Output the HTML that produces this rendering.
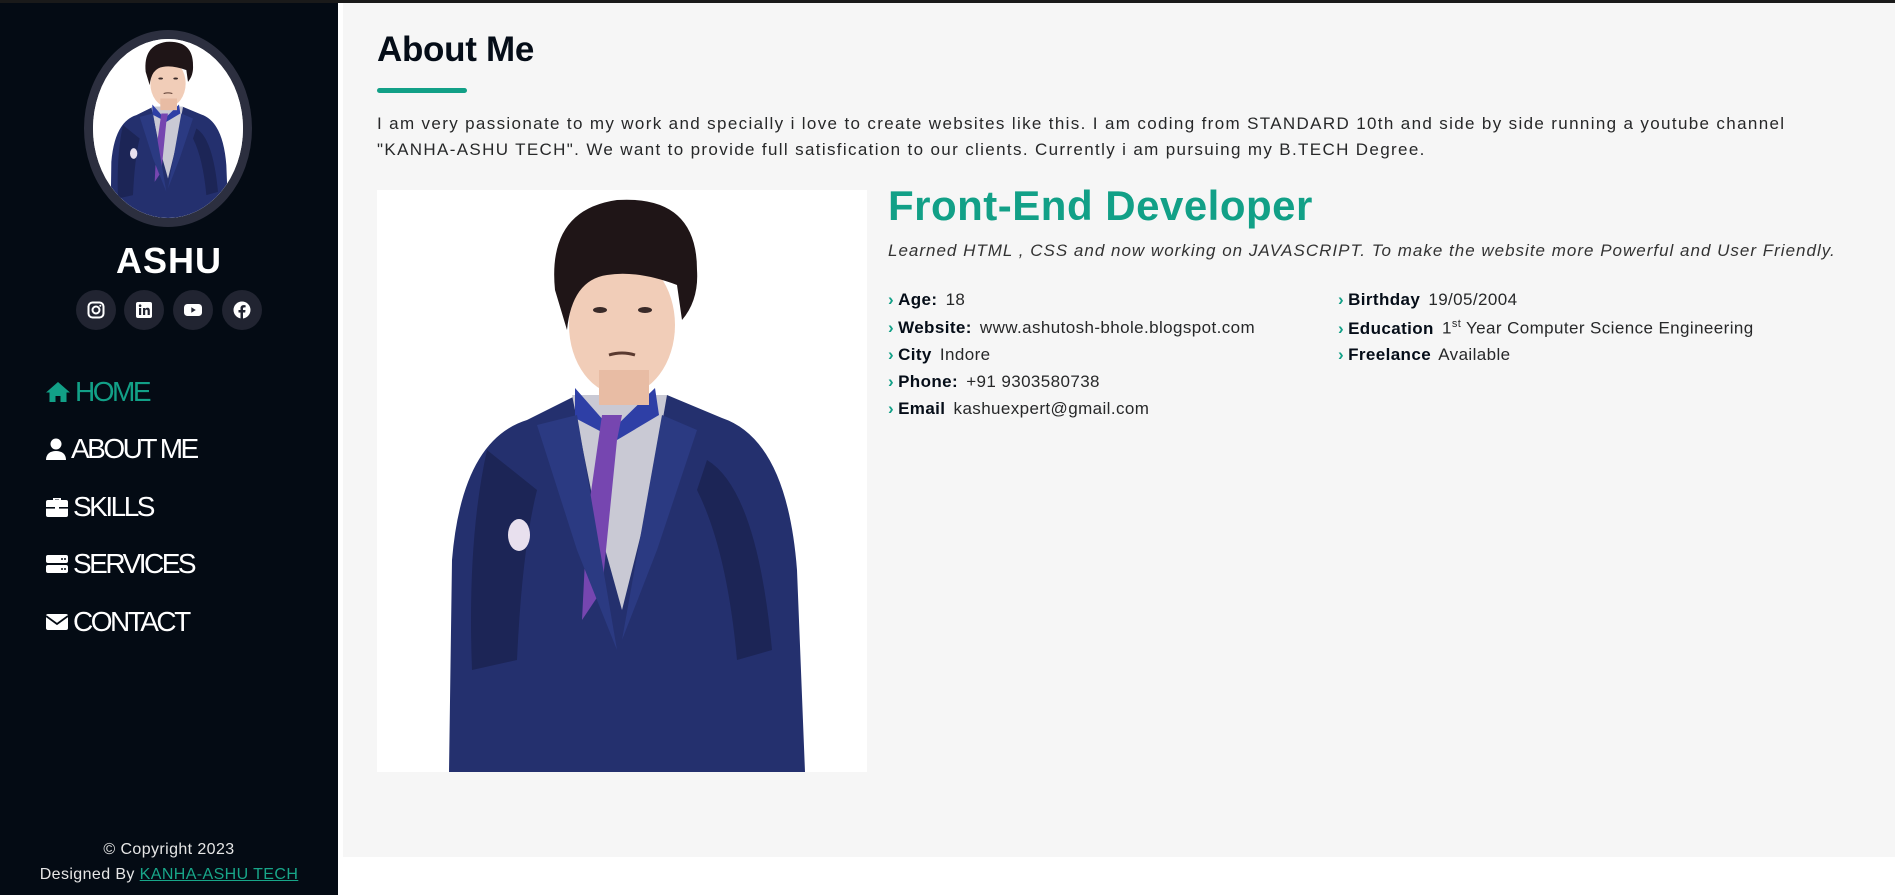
<!DOCTYPE html>
<html><head><meta charset="utf-8">
<style>
*{margin:0;padding:0;box-sizing:border-box}
body{width:1895px;height:895px;overflow:hidden;background:#fff;font-family:"Liberation Sans",sans-serif;position:relative}
.topbar{position:absolute;left:0;top:0;width:1895px;height:3px;background:#1a1a1a;z-index:5}
.side{position:absolute;left:0;top:0;width:338px;height:895px;background:#040b14}
.main{position:absolute;left:343px;top:3px;width:1552px;height:854px;background:#f6f6f6}
.avatar{position:absolute;left:84px;top:30px;width:168px;height:197px;border-radius:50%;border:9px solid #2c2f3f;background:#fff;overflow:hidden}
.name{position:absolute;left:0;width:338px;top:240px;text-align:center;color:#fff;font-weight:bold;font-size:36px;letter-spacing:1px}
.soc{position:absolute;width:40px;height:40px;border-radius:50%;background:#212431;top:290px}
.soc svg{position:absolute;left:11px;top:11px}
.nav{position:absolute;left:45px;color:#fff;font-size:28px;letter-spacing:-2.5px;display:flex;align-items:center;height:34px}
.nav svg{margin-right:4px}
.foot{position:absolute;left:0;width:338px;text-align:center;color:#e6e6e6;font-size:16px;letter-spacing:0.4px}
.foot a{color:#18a689;text-decoration:underline}
h1{position:absolute;left:377px;top:30px;font-size:35px;font-weight:bold;color:#050d18;letter-spacing:-0.3px}
.bar{position:absolute;left:377px;top:88px;width:90px;height:5px;border-radius:3px;background:#12a087}
.para{position:absolute;left:377px;top:111px;width:1500px;font-size:17px;line-height:26px;color:#272829;letter-spacing:1.35px;white-space:nowrap}
.photo{position:absolute;left:377px;top:190px;width:490px;height:582px;background:#fff}
h2{position:absolute;left:888px;top:182px;font-size:42px;font-weight:bold;color:#12a087;letter-spacing:0.5px}
.it{position:absolute;left:888px;top:241px;font-size:17px;font-style:italic;color:#333;letter-spacing:1px}
.li{position:absolute;font-size:17px;color:#272829;white-space:nowrap;letter-spacing:0.4px}
.li b{color:#050d18;margin-right:3px}
.li i{display:inline-block;color:#12a087;font-style:normal;font-weight:bold;margin-right:4px}
</style></head><body>
<div class="topbar"></div>
<div class="side">
  <div class="avatar">
    <svg width="150" height="179" viewBox="20 0 450 540" preserveAspectRatio="xMidYMid slice"><use href="#man"/></svg>
  </div>
  <div class="name">ASHU</div>
  <div class="soc" style="left:76px"><svg width="18" height="18" viewBox="0 0 18 18"><rect x="1.5" y="1.5" width="15" height="15" rx="4" fill="none" stroke="#fff" stroke-width="2"/><circle cx="9" cy="9" r="3.5" fill="none" stroke="#fff" stroke-width="2"/><circle cx="13.3" cy="4.7" r="1" fill="#fff"/></svg></div>
  <div class="soc" style="left:124px"><svg width="18" height="18" viewBox="0 0 18 18"><rect x="1" y="1" width="16" height="16" rx="2" fill="#fff"/><rect x="4" y="7" width="2.2" height="7" fill="#212431"/><circle cx="5.1" cy="4.7" r="1.3" fill="#212431"/><path d="M8 7h2.1v1c.5-.8 1.3-1.2 2.3-1.2 1.7 0 2.4 1 2.4 2.9V14h-2.2v-3.8c0-1-.3-1.6-1.1-1.6-.9 0-1.3.6-1.3 1.6V14H8z" fill="#212431"/></svg></div>
  <div class="soc" style="left:173px"><svg width="18" height="18" viewBox="0 0 18 18"><rect x="0" y="3" width="18" height="12" rx="3.5" fill="#fff"/><path d="M7.3 6.3v5.4L11.8 9z" fill="#212431"/></svg></div>
  <div class="soc" style="left:222px"><svg width="18" height="18" viewBox="0 0 18 18"><circle cx="9" cy="9" r="8.5" fill="#fff"/><path d="M10 18v-6.5h2.2l.3-2.5H10V7.6c0-.7.3-1.2 1.2-1.2h1.4V4.2c-.4 0-1.1-.1-2-.1-2 0-3.1 1.2-3.1 3.3V9H5.5v2.5h2V18z" fill="#212431"/></svg></div>

  <div class="nav" style="top:375px;color:#12a087"><svg width="26" height="22" viewBox="0 0 26 22"><path d="M13 1L1 11.5h3.5V21h6v-6h5v6h6v-9.5H25z" fill="#12a087"/></svg>HOME</div>
  <div class="nav" style="top:432px"><svg width="22" height="22" viewBox="0 0 22 22"><circle cx="11" cy="6" r="5.5" fill="#fff"/><path d="M1 22c0-6 4-9 10-9s10 3 10 9z" fill="#fff"/></svg>ABOUT ME</div>
  <div class="nav" style="top:490px"><svg width="24" height="22" viewBox="0 0 24 22"><path d="M8 4V2h8v2h-2V3.5h-4V4z" fill="#fff"/><rect x="1" y="4" width="22" height="17" rx="2" fill="#fff"/><rect x="1" y="11" width="22" height="1.6" fill="#040b14"/><rect x="10" y="10" width="4" height="4" fill="#fff"/></svg>SKILLS</div>
  <div class="nav" style="top:547px"><svg width="24" height="22" viewBox="0 0 24 22"><rect x="1" y="2" width="22" height="8" rx="2" fill="#fff"/><rect x="1" y="12" width="22" height="8" rx="2" fill="#fff"/><circle cx="17" cy="6" r="1" fill="#040b14"/><circle cx="20" cy="6" r="1" fill="#040b14"/><circle cx="17" cy="16" r="1" fill="#040b14"/><circle cx="20" cy="16" r="1" fill="#040b14"/></svg>SERVICES</div>
  <div class="nav" style="top:605px"><svg width="24" height="22" viewBox="0 0 24 22"><rect x="1" y="3" width="22" height="16" rx="2" fill="#fff"/><path d="M1 5l11 8 11-8" fill="none" stroke="#040b14" stroke-width="1.8"/></svg>CONTACT</div>

  <div class="foot" style="top:841px">© Copyright 2023</div>
  <div class="foot" style="top:866px">Designed By <a>KANHA-ASHU TECH</a></div>
</div>

<div class="main"></div>
<h1>About Me</h1>
<div class="bar"></div>
<div class="para">I am very passionate to my work and specially i love to create websites like this. I am coding from STANDARD 10th and side by side running a youtube channel<br>"KANHA-ASHU TECH". We want to provide full satisfication to our clients. Currently i am pursuing my B.TECH Degree.</div>

<div class="photo">
<svg width="490" height="582" viewBox="0 0 490 582">
<g id="man">
<rect x="0" y="0" width="490" height="582" fill="#fff"/>
<path d="M72 582 L75 370 Q85 250 150 230 L200 205 L290 205 L345 228 Q410 250 420 380 L428 582Z" fill="#24306e"/>
<path d="M110 260 Q90 350 95 480 L140 470 Q145 360 160 300Z" fill="#1c2556"/>
<path d="M330 270 Q380 300 395 460 L360 470 Q350 360 320 300Z" fill="#1c2556"/>
<path d="M195 205 L290 205 L270 320 L245 420 L220 330 Z" fill="#c9c9d4"/>
<path d="M198 198 L235 240 L278 198 L282 225 L240 250 L198 228Z" fill="#2e3fa6"/>
<path d="M225 225 L245 225 L240 250 L225 400 L205 430 L210 330Z" fill="#7646b0"/>
<path d="M200 225 L160 235 L200 360 L240 460 Z" fill="#2b3a82"/>
<path d="M285 225 L320 240 L280 360 L245 450 Z" fill="#2b3a82"/>
<ellipse cx="142" cy="345" rx="11" ry="16" fill="#e8e0ee"/>
<ellipse cx="245" cy="135" rx="53" ry="70" fill="#f1cdb8"/>
<rect x="222" y="180" width="50" height="35" fill="#e8bca4"/>
<path d="M178 100 Q170 20 240 10 Q320 5 320 80 Q322 110 305 130 L300 95 Q260 80 230 85 Q195 90 190 140Z" fill="#1f1517"/>
<ellipse cx="223" cy="120" rx="7" ry="3" fill="#3a2a28"/>
<ellipse cx="268" cy="120" rx="7" ry="3" fill="#3a2a28"/>
<path d="M232 165 Q245 161 258 165" stroke="#5a3a30" stroke-width="3" fill="none"/>
</g>
</svg>
</div>

<h2>Front-End Developer</h2>
<div class="it">Learned HTML , CSS and now working on JAVASCRIPT. To make the website more Powerful and User Friendly.</div>

<div class="li" style="left:888px;top:290px"><i>›</i><b>Age:</b> 18</div>
<div class="li" style="left:888px;top:318px"><i>›</i><b>Website:</b> www.ashutosh-bhole.blogspot.com</div>
<div class="li" style="left:888px;top:345px"><i>›</i><b>City</b> Indore</div>
<div class="li" style="left:888px;top:372px"><i>›</i><b>Phone:</b> +91 9303580738</div>
<div class="li" style="left:888px;top:399px"><i>›</i><b>Email</b> kashuexpert@gmail.com</div>
<div class="li" style="left:1338px;top:290px"><i>›</i><b>Birthday</b> 19/05/2004</div>
<div class="li" style="left:1338px;top:318px"><i>›</i><b>Education</b> 1<sup style="font-size:11px">st</sup> Year Computer Science Engineering</div>
<div class="li" style="left:1338px;top:345px"><i>›</i><b>Freelance</b> Available</div>
</body></html>
